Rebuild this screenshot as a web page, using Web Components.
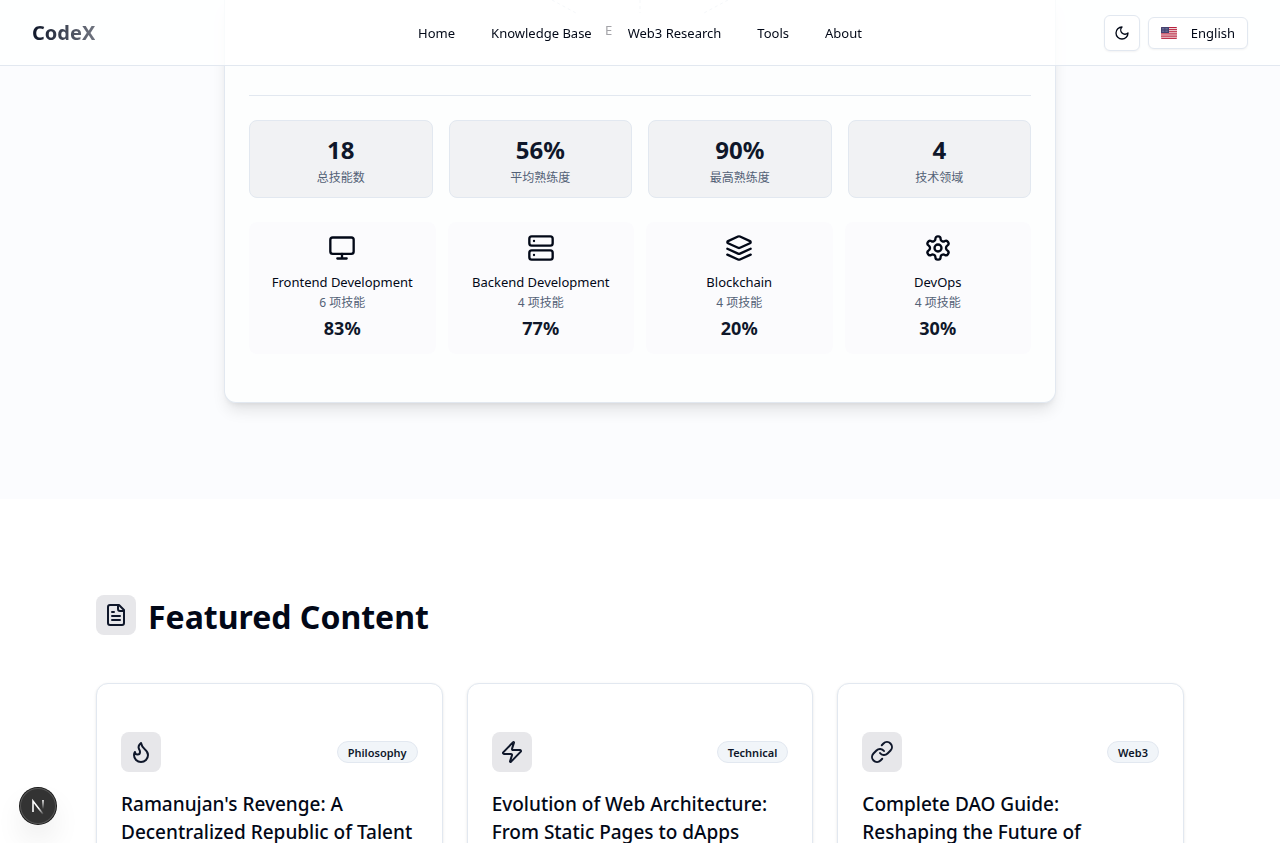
<!DOCTYPE html>
<html lang="en">
<head>
<meta charset="utf-8">
<meta name="viewport" content="width=device-width, initial-scale=1">
<title>CodeX</title>
<style>
  html, body { margin: 0; height: 100%; overflow: hidden; }
  body {
    background: #fff; color: #020817;
    font-family: "Noto Sans", "Noto Sans CJK SC", sans-serif;
    font-size: 13px; line-height: 20px;
    --primary: #0f172a; --muted: #536176; --border: #e2e8f0;
  }
</style>
</head>
<body>
<codex-app></codex-app>
<script>
const ICONS = {
  monitor: '<rect width="20" height="14" x="2" y="3" rx="2"/><path d="M8 21h8M12 17v4"/>',
  server: '<rect width="20" height="8" x="2" y="2" rx="2"/><rect width="20" height="8" x="2" y="14" rx="2"/><path d="M6 6h.01M6 18h.01"/>',
  layers: '<path d="m12.83 2.18a2 2 0 0 0-1.66 0L2.6 6.08a1 1 0 0 0 0 1.83l8.58 3.91a2 2 0 0 0 1.66 0l8.58-3.9a1 1 0 0 0 0-1.83Z"/><path d="m22 17.65-9.17 4.16a2 2 0 0 1-1.66 0L2 17.65"/><path d="m22 12.65-9.17 4.16a2 2 0 0 1-1.66 0L2 12.65"/>',
  settings: '<path d="M12.22 2h-.44a2 2 0 0 0-2 2v.18a2 2 0 0 1-1 1.73l-.43.25a2 2 0 0 1-2 0l-.15-.08a2 2 0 0 0-2.73.73l-.22.38a2 2 0 0 0 .73 2.73l.15.1a2 2 0 0 1 1 1.72v.51a2 2 0 0 1-1 1.74l-.15.09a2 2 0 0 0-.73 2.73l.22.38a2 2 0 0 0 2.73.73l.15-.08a2 2 0 0 1 2 0l.43.25a2 2 0 0 1 1 1.73V20a2 2 0 0 0 2 2h.44a2 2 0 0 0 2-2v-.18a2 2 0 0 1 1-1.73l.43-.25a2 2 0 0 1 2 0l.15.08a2 2 0 0 0 2.73-.73l.22-.39a2 2 0 0 0-.73-2.73l-.15-.08a2 2 0 0 1-1-1.74v-.5a2 2 0 0 1 1-1.74l.15-.09a2 2 0 0 0 .73-2.73l-.22-.38a2 2 0 0 0-2.73-.73l-.15.08a2 2 0 0 1-2 0l-.43-.25a2 2 0 0 1-1-1.73V4a2 2 0 0 0-2-2z"/><circle cx="12" cy="12" r="3"/>',
  moon: '<path d="M12 3a6 6 0 0 0 9 9 9 9 0 1 1-9-9Z"/>',
  file: '<path d="M15 2H6a2 2 0 0 0-2 2v16a2 2 0 0 0 2 2h12a2 2 0 0 0 2-2V7Z"/><path d="M14 2v4a2 2 0 0 0 2 2h4"/><path d="M10 9H8M16 13H8M16 17H8"/>',
  flame: '<path d="M8.5 14.5A2.5 2.5 0 0 0 11 12c0-1.38-.5-2-1-3-1.072-2.143-.224-4.054 2-6 .5 2.5 2 4.9 4 6.5 2 1.6 3 3.5 3 5.5a7 7 0 1 1-14 0c0-1.153.433-2.294 1-3a2.5 2.5 0 0 0 2.5 2.5z"/>',
  zap: '<path d="M4 14a1 1 0 0 1-.78-1.63l9.9-10.2a.5.5 0 0 1 .86.46l-1.92 6.02A1 1 0 0 0 13 10h7a1 1 0 0 1 .78 1.63l-9.9 10.2a.5.5 0 0 1-.86-.46l1.92-6.02A1 1 0 0 0 11 14z"/>',
  link: '<path d="M10 13a5 5 0 0 0 7.54.54l3-3a5 5 0 0 0-7.07-7.07l-1.72 1.71"/><path d="M14 11a5 5 0 0 0-7.54-.54l-3 3a5 5 0 0 0 7.07 7.07l1.71-1.71"/>'
};

function define(name, render) {
  customElements.define(name, class extends HTMLElement {
    constructor() {
      super();
      this.attachShadow({ mode: 'open' });
    }
    connectedCallback() {
      this.shadowRoot.innerHTML = render(this);
    }
  });
}

define('cx-icon', el => `
<style>
  :host { display: block; width: var(--icon-size, 20px); height: var(--icon-size, 20px); }
  svg { display: block; width: 100%; height: 100%; fill: none; stroke: currentColor;
        stroke-width: 2; stroke-linecap: round; stroke-linejoin: round; }
</style>
<svg viewBox="0 0 24 24" aria-hidden="true">${ICONS[el.getAttribute('name')]}</svg>`);

define('icon-tile', el => `
<style>
  :host { display: grid; place-items: center; flex: none; width: 40px; height: 40px;
          border-radius: 8px; background: #e7e7ea; color: var(--primary); --icon-size: 24px; }
</style>
<cx-icon name="${el.getAttribute('icon')}"></cx-icon>`);

define('us-flag', () => `
<style>:host { display: block; width: 16px; height: 12px; } svg { display: block; }</style>
<svg width="16" height="12" viewBox="0 0 16 12" aria-hidden="true">
  <clipPath id="c"><rect width="16" height="12" rx="1"/></clipPath>
  <g clip-path="url(#c)">
    <rect width="16" height="12" fill="#f6eeee"/>
    <path d="M0 .5h16M0 2.4h16M0 4.3h16M0 6.2h16M0 8h16M0 9.8h16M0 11.6h16" stroke="#b8203c"/>
    <rect width="8" height="6" fill="#434371"/>
    <path d="M1 1.5h6M1 3h6M1 4.5h6" stroke="#a9a9c4" stroke-width=".6" stroke-dasharray=".6 .8"/>
  </g>
</svg>`);

define('site-header', () => `
<style>
  :host { display: grid; grid-template-columns: 1fr auto 1fr; align-items: center;
          position: sticky; top: 0; z-index: 10; box-sizing: border-box; height: 66px; padding: 0 32px;
          background: rgba(255,255,255,.8); border-bottom: 1px solid var(--border); }
  a { color: inherit; text-decoration: none; }
  .logo { justify-self: start; font-size: 20px; line-height: 28px; font-weight: 700;
          background: linear-gradient(to right, #0f172a, rgba(15,23,42,.6));
          -webkit-background-clip: text; background-clip: text; color: transparent; }
  nav { display: flex; gap: 36px; }
  .tools { justify-self: end; display: flex; align-items: center; gap: 8px; }
  button { display: flex; align-items: center; justify-content: center; box-sizing: border-box;
           margin: 0; padding: 0; font: inherit; color: inherit; background: #fff;
           border: 1px solid var(--border); border-radius: 6px; box-shadow: 0 1px 2px rgba(0,0,0,.05); }
  .theme { width: 36px; height: 36px; --icon-size: 16px; }
  .lang { height: 32px; padding: 0 12px; gap: 14px; }
</style>
<a class="logo" href="#">CodeX</a>
<nav>
  <a href="#">Home</a><a href="#">Knowledge Base</a><a href="#">Web3 Research</a><a href="#">Tools</a><a href="#">About</a>
</nav>
<div class="tools">
  <button class="theme" aria-label="Toggle theme"><cx-icon name="moon"></cx-icon></button>
  <button class="lang"><us-flag></us-flag><span>English</span></button>
</div>`);

define('stat-box', () => `
<style>
  :host { display: block; box-sizing: border-box; height: 78px; padding: 11px 12px; text-align: center;
          border: 1px solid var(--border); border-radius: 8px; background: #f1f2f4; }
  .value { font-size: 24px; line-height: 36px; font-weight: 700; color: var(--primary); }
  .label { font-size: 12px; line-height: 20px; color: var(--muted); }
</style>
<div class="value"><slot name="value"></slot></div>
<div class="label"><slot></slot></div>`);

define('skill-box', el => `
<style>
  :host { display: flex; flex-direction: column; align-items: center; box-sizing: border-box;
          height: 132px; padding: 12px; border-radius: 8px; background: #fbfbfd;
          text-align: center; --icon-size: 28px; }
  .name { margin-top: 10px; }
  .count { margin-top: 2px; font-size: 12px; line-height: 18px; color: var(--muted); }
  .value { margin-top: 2px; font-size: 18px; line-height: 28px; font-weight: 700; color: var(--primary); }
</style>
<cx-icon name="${el.getAttribute('icon')}"></cx-icon>
<div class="name"><slot></slot></div>
<div class="count"><slot name="count"></slot></div>
<div class="value"><slot name="value"></slot></div>`);

define('skills-section', () => `
<style>
  :host { display: block; padding: 0 24px 96px; background: #fbfcfe; }
  .card { box-sizing: border-box; max-width: 832px; margin: 0 auto; padding: 0 24px 48px;
          background: #fdfefe; border: 1px solid var(--border); border-top: 0;
          border-radius: 0 0 12px 12px;
          box-shadow: 0 10px 15px -3px rgba(0,0,0,.1), 0 4px 6px -4px rgba(0,0,0,.1); }
  .chart { position: relative; height: 95px; }
  .chart svg { display: block; margin: 0 auto; }
  .axis { position: absolute; left: 50%; top: 20px; z-index: 11; margin-left: -35px; color: #a3a3a8; }
  .stats { display: grid; grid-template-columns: repeat(4, 1fr); gap: 16px;
           border-top: 1px solid var(--border); padding: 24px 0; }
  .skills { display: grid; grid-template-columns: repeat(4, 1fr); gap: 12px; }
</style>
<div class="card">
  <div class="chart">
    <svg width="180" height="14" viewBox="0 0 180 14" fill="none" stroke="#cbd5e1" stroke-dasharray="3 3" aria-hidden="true">
      <path d="M2 0 26 13M90 0v13M178 0 154 13"/>
    </svg>
    <div class="axis">E</div>
  </div>
  <div class="stats">
    <stat-box><span slot="value">18</span>总技能数</stat-box>
    <stat-box><span slot="value">56%</span>平均熟练度</stat-box>
    <stat-box><span slot="value">90%</span>最高熟练度</stat-box>
    <stat-box><span slot="value">4</span>技术领域</stat-box>
  </div>
  <div class="skills">
    <skill-box icon="monitor">Frontend Development<span slot="count">6 项技能</span><span slot="value">83%</span></skill-box>
    <skill-box icon="server">Backend Development<span slot="count">4 项技能</span><span slot="value">77%</span></skill-box>
    <skill-box icon="layers">Blockchain<span slot="count">4 项技能</span><span slot="value">20%</span></skill-box>
    <skill-box icon="settings">DevOps<span slot="count">4 项技能</span><span slot="value">30%</span></skill-box>
  </div>
</div>`);

define('article-card', el => `
<style>
  :host { display: block; box-sizing: border-box; padding: 48px 24px; background: #fff;
          border: 1px solid var(--border); border-radius: 12px; box-shadow: 0 1px 3px rgba(0,0,0,.1); }
  .top { display: flex; align-items: center; justify-content: space-between; }
  .tag { box-sizing: border-box; height: 22px; padding: 1px 10px; border: 1px solid var(--border);
         border-radius: 11px; background: #f1f5f9; color: var(--primary);
         font-size: 11px; line-height: 20px; font-weight: 600; }
  h3 { margin: 18px 0 0; font-size: 19px; line-height: 28px; font-weight: 500; }
</style>
<div class="top">
  <icon-tile icon="${el.getAttribute('icon')}"></icon-tile>
  <span class="tag">${el.getAttribute('tag')}</span>
</div>
<h3><slot></slot></h3>`);

define('featured-section', () => `
<style>
  :host { display: block; box-sizing: border-box; max-width: 1136px; margin: 0 auto; padding: 96px 24px; }
  .head { display: flex; gap: 12px; height: 88px; }
  h2 { margin: 0; font-size: 32px; line-height: 44px; font-weight: 700; }
  .grid { display: grid; grid-template-columns: repeat(3, 1fr); gap: 24px; }
</style>
<div class="head"><icon-tile icon="file"></icon-tile><h2>Featured Content</h2></div>
<div class="grid">
  <article-card icon="flame" tag="Philosophy">Ramanujan's Revenge: A Decentralized Republic of Talent</article-card>
  <article-card icon="zap" tag="Technical">Evolution of Web Architecture: From Static Pages to dApps</article-card>
  <article-card icon="link" tag="Web3">Complete DAO Guide: Reshaping the Future of</article-card>
</div>`);

define('dev-badge', () => `
<style>
  :host { position: fixed; left: 20px; bottom: 19px; z-index: 20; }
  button { display: block; width: 36px; height: 36px; padding: 0; border: 0; border-radius: 50%;
           background: #333; box-shadow: 0 0 0 1px #171717, inset 0 0 0 1px #555, 0 16px 32px -8px rgba(0,0,0,.24); }
  svg { display: block; }
</style>
<button aria-label="Open developer tools">
  <svg width="36" height="36" viewBox="0 0 36 36" fill="none" stroke-width="1.6" aria-hidden="true">
    <defs>
      <linearGradient id="a" gradientUnits="userSpaceOnUse" x1="19" y1="20" x2="24" y2="26"><stop stop-color="#fff"/><stop offset="1" stop-color="#fff" stop-opacity="0"/></linearGradient>
      <linearGradient id="b" gradientUnits="userSpaceOnUse" x1="0" y1="12" x2="0" y2="21"><stop stop-color="#fff"/><stop offset="1" stop-color="#fff" stop-opacity="0"/></linearGradient>
    </defs>
    <path d="M13 24V13L23 26" stroke="url(#a)"/>
    <path d="M23 12v10" stroke="url(#b)"/>
  </svg>
</button>`);

define('codex-app', () => `
<style>
  :host { display: block; }
  main { display: block; margin-top: -66px; }
</style>
<site-header></site-header>
<main>
  <skills-section></skills-section>
  <featured-section></featured-section>
</main>
<dev-badge></dev-badge>`);
</script>
</body>
</html>
